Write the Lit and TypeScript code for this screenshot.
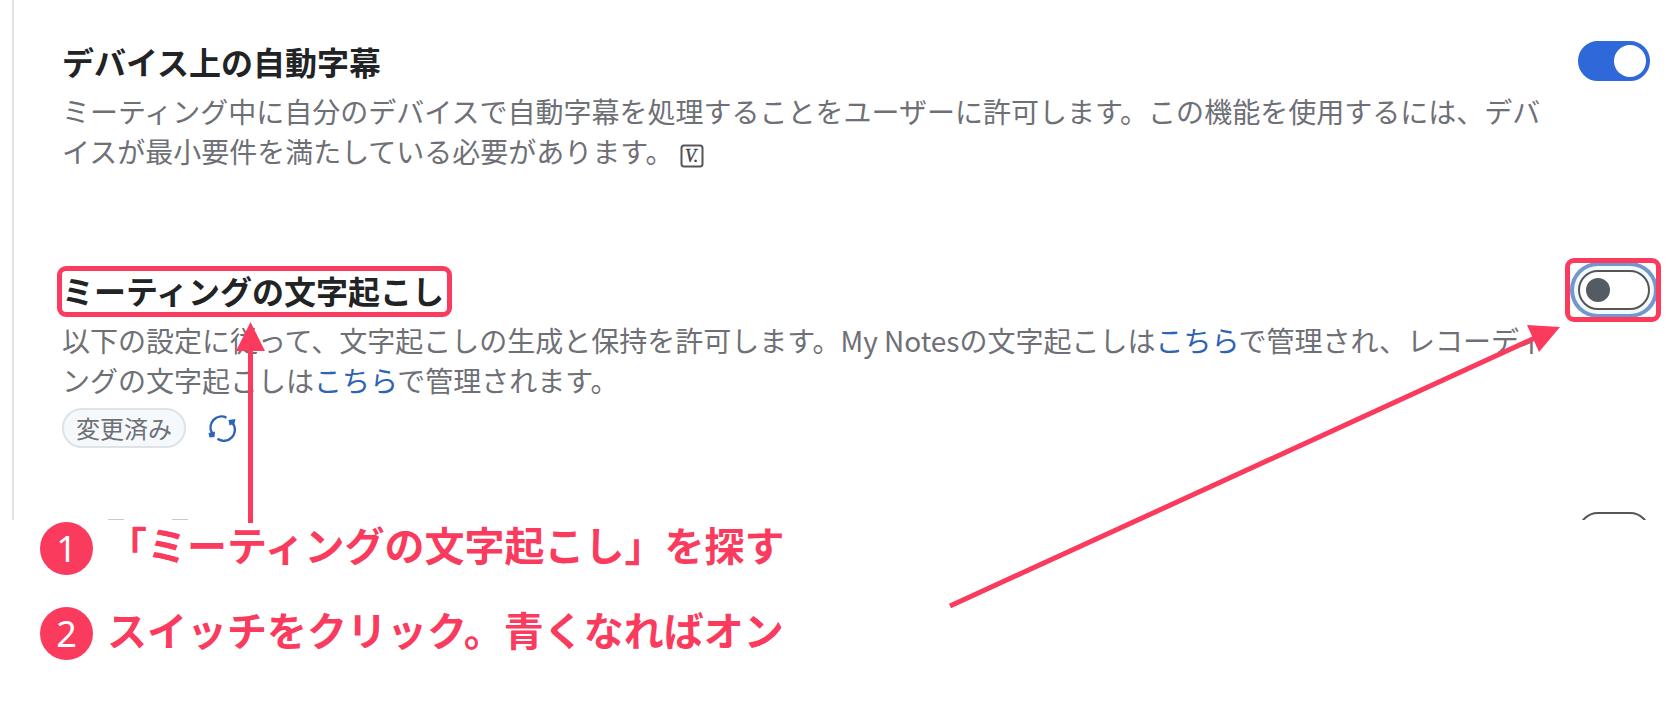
import { LitElement, html, css } from "lit";
import { customElement, property } from "lit/decorators.js";

@customElement("toggle-switch")
class ToggleSwitch extends LitElement {
  @property({ type: Boolean }) on = false;
  @property({ type: Boolean }) ring = false;
  @property() label = "";

  static styles = css`
    :host {
      display: block;
    }
    .track {
      display: block;
      width: 72px;
      height: 40px;
    }
    .input {
      appearance: none;
      display: flex;
      align-items: center;
      box-sizing: border-box;
      width: 72px;
      height: 40px;
      margin: 0;
      padding: 0 6px;
      border: 2px solid #555655;
      border-radius: 20px;
      background: #fff;
      cursor: pointer;
      outline: none;
    }
    .input::before {
      content: "";
      width: 24px;
      height: 24px;
      border-radius: 50%;
      background: #555b63;
    }
    .input:checked {
      justify-content: flex-end;
      padding: 0 2px;
      border-color: #2f69d9;
      background: #2f69d9;
    }
    .input:checked::before {
      width: 32px;
      height: 32px;
      background: #fff;
    }
    .ring {
      box-shadow: 0 0 0 4px #f3faff, 0 0 0 8px #7197cf;
    }
  `;

  render() {
    return html`<label class="track">
      <input class="input ${this.ring ? "ring" : ""}" type="checkbox" role="switch"
        aria-label=${this.label} .checked=${this.on} />
    </label>`;
  }
}

@customElement("setting-row")
class SettingRow extends LitElement {
  @property() heading = "";
  @property({ type: Boolean }) on = false;
  @property({ type: Boolean }) marked = false;

  static styles = css`
    :host {
      display: flex;
      justify-content: space-between;
      align-items: flex-start;
      gap: 24px;
    }
    .body {
      flex: 1;
      max-width: 1492px;
    }
    .heading {
      position: relative;
      display: inline-block;
      margin: 0 0 10px;
      font-size: 32px;
      line-height: 40px;
      font-weight: 700;
      color: #222325;
    }
    .switch {
      position: relative;
    }
    .mark::after {
      content: "";
      position: absolute;
      border: 5px solid #fa3b5e;
      border-radius: 9px;
      pointer-events: none;
    }
    .heading.mark::after {
      inset: -4px -8px -7px -5px;
    }
    .switch.mark::after {
      inset: -12px -11px -12px -13px;
    }
  `;

  render() {
    const mark = this.marked ? "mark" : "";
    return html`
      <div class="body">
        <h2 class="heading ${mark}">${this.heading}</h2>
        <slot></slot>
      </div>
      <div class="switch ${mark}">
        <toggle-switch .label=${this.heading} ?on=${this.on} ?ring=${this.marked}></toggle-switch>
      </div>
    `;
  }
}

const steps = ["「ミーティングの文字起こし」を探す", "スイッチをクリック。青くなればオン"];

@customElement("app-root")
class AppRoot extends LitElement {
  static styles = css`
    :host {
      display: block;
      position: relative;
      overflow: hidden;
      background: #fff;
      min-height: 100vh;
      font-family: "Noto Sans CJK JP", sans-serif;
    }
    .panel {
      display: flex;
      flex-direction: column;
      margin-left: 12px;
      padding: 41px 26px 0 48px;
      border-left: 2px solid #dfe3e3;
    }
    .first {
      margin-bottom: 99px;
    }
    .second {
      margin-bottom: 64px;
    }
    .cut {
      height: 8px;
      overflow: hidden;
    }
    .text {
      margin: 0;
      font-size: 28px;
      line-height: 40px;
      color: #6e7076;
      line-break: anywhere;
    }
    .link {
      color: #2e64b4;
      text-decoration: none;
    }
    .version {
      width: 24px;
      height: 24px;
      margin-left: 6px;
      vertical-align: -5px;
    }
    .vtext {
      font: italic 400 18px "Liberation Serif", serif;
      fill: #45474b;
      stroke: #45474b;
      stroke-width: 0.4px;
    }
    .status {
      display: flex;
      align-items: center;
      gap: 22px;
      margin-top: 8px;
    }
    .tag {
      padding: 0 12px;
      border: 2px solid #dfe3e6;
      border-radius: 20px;
      background: #f5f9fc;
      color: #6e7076;
      font-size: 24px;
      line-height: 36px;
    }
    .reset {
      display: flex;
      padding: 0;
      border: 0;
      background: none;
      cursor: pointer;
    }
    .steps {
      display: flex;
      flex-direction: column;
      gap: 32px;
      margin: 0;
      padding: 2px 40px 0;
      list-style: none;
    }
    .step {
      display: flex;
      align-items: center;
      gap: 14px;
      color: #fa3b5e;
      font-size: 40px;
      line-height: 42px;
    }
    .label {
      padding-bottom: 10px;
      font-weight: 700;
    }
    .number {
      flex: none;
      width: 53px;
      height: 53px;
      border-radius: 50%;
      background: #fa3b5e;
      color: #fff;
      font-family: "Noto Sans", sans-serif;
      font-size: 36px;
      line-height: 53px;
      text-align: center;
    }
    .arrow {
      position: absolute;
      pointer-events: none;
      fill: #fa3b5e;
    }
    .up {
      left: 235px;
      top: 322px;
    }
    .across {
      right: 116px;
      top: 320px;
    }
    .shaft {
      stroke: #fa3b5e;
      stroke-width: 5;
    }
  `;

  render() {
    return html`
      <main class="panel">
        <setting-row class="first" heading="デバイス上の自動字幕" on>
          <p class="text">ミーティング中に自分のデバイスで自動字幕を処理することをユーザーに許可します。この機能を使用するには、デバイスが最小要件を満たしている必要があります。<svg class="version" viewBox="0 0 24 24" role="img" aria-label="V.">
              <rect x="1.5" y="1.5" width="21" height="21" rx="2.5" fill="none" stroke="#54565a" stroke-width="2" />
              <text class="vtext" x="5" y="18">V.</text>
            </svg></p>
        </setting-row>
        <setting-row class="second" heading="ミーティングの文字起こし" marked>
          <p class="text">以下の設定に従って、文字起こしの生成と保持を許可します。My Notesの文字起こしは<a class="link" href="#notes">こちら</a>で管理され、レコーディングの文字起こしは<a class="link" href="#recordings">こちら</a>で管理されます。</p>
          <div class="status">
            <span class="tag">変更済み</span>
            <button class="reset" aria-label="リセット">
              <svg width="28" height="28" viewBox="0 0 28 28" fill="none" stroke="#2e64b4" stroke-width="2.4">
                <path d="M4 19A11 11 0 0 1 18.5 3.700" />
                <path d="M24.500 9A11 11 0 0 1 9.500 24.800" />
                <path d="M0.500 19L7 17.500L6.500 23L1.500 23.500Z" fill="#2e64b4" stroke="none" />
                <path d="M20.500 6L27.500 5L26.500 9.500L21.500 11.500Z" fill="#2e64b4" stroke="none" />
              </svg>
            </button>
          </div>
        </setting-row>
        <setting-row class="cut" heading="の認証語"></setting-row>
      </main>
      <ol class="steps">
        ${steps.map((s, i) => html`<li class="step"><span class="number">${i + 1}</span><span class="label">${s}</span></li>`)}
      </ol>
      <svg class="arrow up" width="31" height="201" viewBox="0 0 31 201" aria-hidden="true">
        <path d="M15.500 0L30 29H1Z" /><path class="shaft" d="M15.500 27V201" />
      </svg>
      <svg class="arrow across" width="612" height="290" viewBox="0 0 612 290" aria-hidden="true">
        <path d="M612 7L579 5L591 32Z" /><path class="shaft" d="M2 286L587 18" />
      </svg>
    `;
  }
}
